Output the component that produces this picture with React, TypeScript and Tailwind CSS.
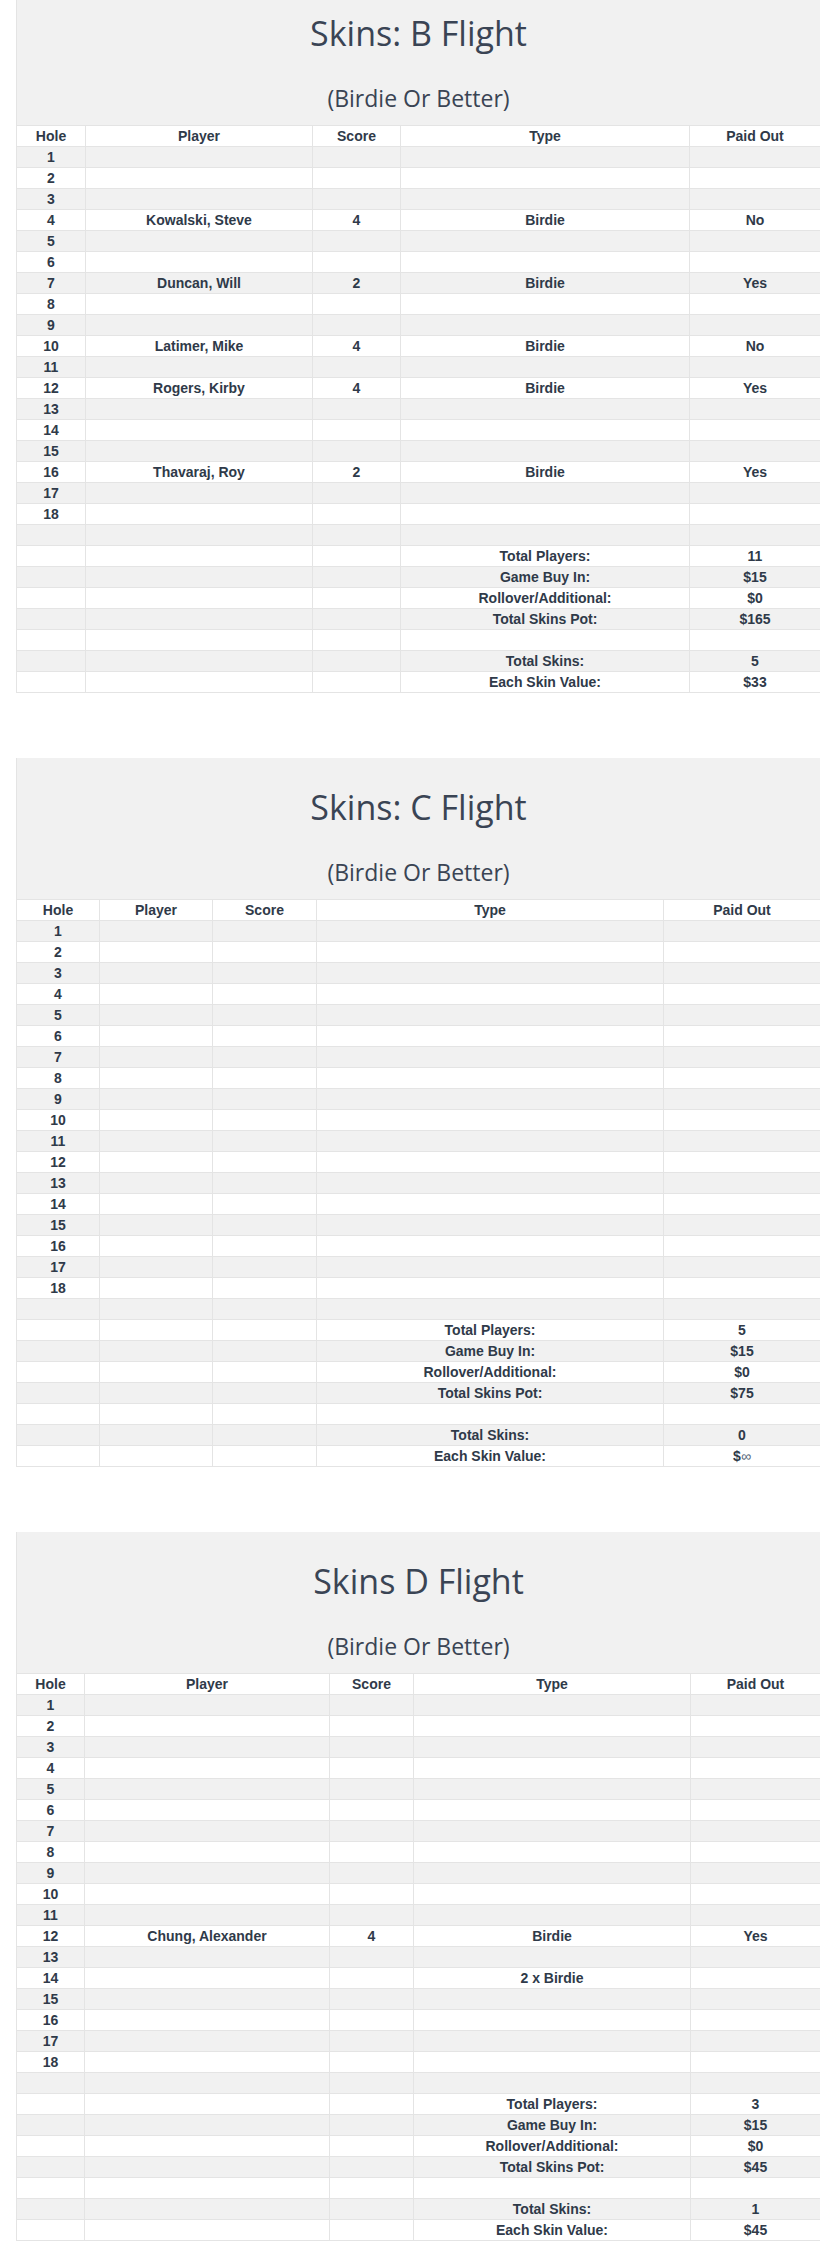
import React from "react";

type Entry = { player: string; score: string; type: string; paid: string };

type Flight = {
  title: string;
  cols: string;
  entries: Record<number, Entry>;
  totals: { players: string; buyIn: string; rollover: string; pot: string; skins: string; value: React.ReactNode };
};

const flights: Flight[] = [
  {
    title: "Skins: B Flight",
    cols: "grid-cols-[69px_227px_88px_289px_1fr]",
    entries: {
      4: { player: "Kowalski, Steve", score: "4", type: "Birdie", paid: "No" },
      7: { player: "Duncan, Will", score: "2", type: "Birdie", paid: "Yes" },
      10: { player: "Latimer, Mike", score: "4", type: "Birdie", paid: "No" },
      12: { player: "Rogers, Kirby", score: "4", type: "Birdie", paid: "Yes" },
      16: { player: "Thavaraj, Roy", score: "2", type: "Birdie", paid: "Yes" },
    },
    totals: { players: "11", buyIn: "$15", rollover: "$0", pot: "$165", skins: "5", value: "$33" },
  },
  {
    title: "Skins: C Flight",
    cols: "grid-cols-[83px_113px_104px_347px_1fr]",
    entries: {},
    totals: {
      players: "5",
      buyIn: "$15",
      rollover: "$0",
      pot: "$75",
      skins: "0",
      value: (
        <>
          $<span className="font-normal text-[#55657a]">∞</span>
        </>
      ),
    },
  },
  {
    title: "Skins D Flight",
    cols: "grid-cols-[68px_245px_84px_277px_1fr]",
    entries: {
      12: { player: "Chung, Alexander", score: "4", type: "Birdie", paid: "Yes" },
      14: { player: "", score: "", type: "2 x Birdie", paid: "" },
    },
    totals: { players: "3", buyIn: "$15", rollover: "$0", pot: "$45", skins: "1", value: "$45" },
  },
];

function Row({ cols, cells, shaded }: { cols: string; cells: React.ReactNode[]; shaded: boolean }) {
  return (
    <div className={`grid ${cols} border-b border-[#e4e4e4] ${shaded ? "bg-[#f1f1f1]" : "bg-white"}`}>
      {cells.map((c, i) => (
        <div key={i} className="border-l border-[#e4e4e4] h-[20px] leading-[20px] text-center whitespace-nowrap overflow-hidden">
          {c}
        </div>
      ))}
    </div>
  );
}

function FlightTable({ flight }: { flight: Flight }) {
  const t = flight.totals;
  const rows: React.ReactNode[][] = [];
  for (let h = 1; h <= 18; h++) {
    const e = flight.entries[h];
    rows.push([h, e?.player ?? "", e?.score ?? "", e?.type ?? "", e?.paid ?? ""]);
  }
  rows.push(["", "", "", "", ""]);
  rows.push(["", "", "", "Total Players:", t.players]);
  rows.push(["", "", "", "Game Buy In:", t.buyIn]);
  rows.push(["", "", "", "Rollover/Additional:", t.rollover]);
  rows.push(["", "", "", "Total Skins Pot:", t.pot]);
  rows.push(["", "", "", "", ""]);
  rows.push(["", "", "", "Total Skins:", t.skins]);
  rows.push(["", "", "", "Each Skin Value:", t.value]);

  return (
    <section className="w-[804px]">
      <div className="h-[142px] bg-[#f1f1f1] border-l border-b border-[#e4e4e4] pt-[29px] text-center text-[#3a4454] font-['Open_Sans',sans-serif]">
        <h1 className="text-[34px] leading-[40px] font-normal">{flight.title}</h1>
        <h2 className="mt-[30px] text-[23px] leading-[30px] font-normal">(Birdie Or Better)</h2>
      </div>
      <div className="font-['Liberation_Sans',Arial,sans-serif] text-[14px] font-bold text-[#2f3a49]">
        <Row cols={flight.cols} cells={["Hole", "Player", "Score", "Type", "Paid Out"]} shaded={false} />
        {rows.map((r, i) => (
          <Row key={i} cols={flight.cols} cells={r} shaded={i % 2 === 0} />
        ))}
      </div>
    </section>
  );
}

export default function App() {
  return (
    <div className="w-[820px] h-[2255px] overflow-hidden bg-white pl-4">
      <div className="-mt-4 flex flex-col gap-[65px]">
        {flights.map((f) => (
          <FlightTable key={f.title} flight={f} />
        ))}
      </div>
    </div>
  );
}
